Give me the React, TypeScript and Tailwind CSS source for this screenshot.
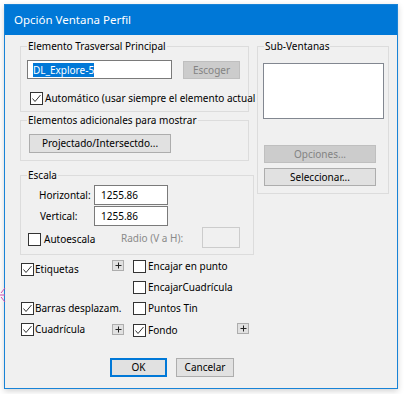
import React from "react";

function CheckBox({ checked }: { checked?: boolean }) {
  return (
    <div className="flex h-[13px] w-[13px] shrink-0 items-center justify-center border border-[#333333] bg-white">
      {checked && (
        <svg width="11" height="11" viewBox="0 0 11 11" fill="none">
          <path d="M1.5 5.5 L4 8.5 L9.5 2" stroke="#333333" strokeWidth="1" />
        </svg>
      )}
    </div>
  );
}

function PlusButton() {
  return (
    <div className="flex h-[11px] w-[12px] shrink-0 items-center justify-center border border-[#adadad] bg-[#e1e1e1]">
      <svg width="7" height="7" viewBox="0 0 7 7" fill="none">
        <path d="M3.5 0.5 V6.5 M0.5 3.5 H6.5" stroke="#222222" strokeWidth="1" />
      </svg>
    </div>
  );
}

function WinButton({
  label,
  disabled,
  isDefault,
  className,
}: {
  label: string;
  disabled?: boolean;
  isDefault?: boolean;
  className?: string;
}) {
  const look = disabled
    ? "border border-[#bfbfbf] bg-[#cccccc] text-[#838383]"
    : isDefault
      ? "border-2 border-[#0078d7] bg-[#e1e1e1] text-black"
      : "border border-[#adadad] bg-[#e1e1e1] text-black";
  return (
    <div
      className={`flex shrink-0 items-center justify-center text-[10px] leading-[13px] ${look} ${className ?? ""}`}
    >
      {label}
    </div>
  );
}

function CheckItem({
  label,
  checked,
  gap = "gap-[1px]",
  className,
}: {
  label: string;
  checked?: boolean;
  gap?: string;
  className?: string;
}) {
  return (
    <div className={`flex items-center whitespace-nowrap ${gap} ${className ?? ""}`}>
      <CheckBox checked={checked} />
      <span className="leading-[13px]">{label}</span>
    </div>
  );
}

export default function App() {
  return (
    <div className="relative min-h-screen bg-white font-['Noto_Sans',sans-serif] text-[10px] text-black">
      {/* stray pink mark at the left edge of the capture */}
      <svg
        className="absolute left-0 top-[287px]"
        width="6"
        height="16"
        viewBox="0 0 6 16"
        fill="none"
      >
        <path d="M5 1 L1 6 M0 8 H5 M1 10 L5 15" stroke="#d04bb0" strokeWidth="1" />
      </svg>

      <div className="ml-[4px] pt-[4px]">
        <div className="flex h-[385px] w-[394px] flex-col border border-[#1883d7] bg-[#f0f0f0] shadow-[0_2px_6px_rgba(0,0,0,0.18)]">
          {/* title bar */}
          <div className="flex h-[30px] shrink-0 items-center bg-[#0078d7] pl-[9px] text-[11.5px] text-white">
            Opción Ventana Perfil
          </div>

          <div className="flex flex-1 flex-col">
            <div className="flex items-start">
              {/* left column */}
              <div className="ml-[15px] mt-[4px] flex w-[234px] flex-col">
                <fieldset className="w-[229px] min-w-0 border border-[#dcdcdc] pb-[6px] pl-[6px]">
                  <legend className="px-[1px] leading-[15px]">Elemento Trasversal Principal</legend>
                  <div className="mt-[6px] flex items-start">
                    <div className="flex h-[19px] w-[145px] items-center border border-[#7a7a7a] bg-white pl-[5px]">
                      <span className="bg-[#0078d7] leading-[14px] text-white">DL_Explore-5</span>
                    </div>
                    <WinButton label="Escoger" disabled className="ml-[11px] mt-[1px] h-[18px] w-[57px]" />
                  </div>
                  <CheckItem
                    label="Automático (usar siempre el elemento actual"
                    checked
                    gap="gap-[2px]"
                    className="ml-[3px] mt-[13px] h-[13px]"
                  />
                </fieldset>

                <fieldset className="mt-[1px] w-[229px] min-w-0 border border-[#dcdcdc] pb-[7px] pl-[6px]">
                  <legend className="px-[1px] leading-[15px]">Elementos adicionales para mostrar</legend>
                  <WinButton label="Projectado/Intersectdo..." className="ml-[2px] mt-[6px] h-[19px] w-[142px]" />
                </fieldset>

                <fieldset className="mt-[7px] w-[234px] min-w-0 border border-[#dcdcdc] pb-[6px] pl-[6px]">
                  <legend className="px-[1px] leading-[15px]">Escala</legend>
                  <div className="mt-[2px] flex h-[20px] items-center">
                    <span className="w-[67px] pl-[12px]">Horizontal:</span>
                    <div className="flex h-[20px] w-[74px] items-center border border-[#7a7a7a] bg-white pl-[6px]">
                      1255.86
                    </div>
                  </div>
                  <div className="mt-[1px] flex h-[20px] items-center">
                    <span className="w-[67px] pl-[13px]">Vertical:</span>
                    <div className="flex h-[20px] w-[74px] items-center border border-[#7a7a7a] bg-white pl-[6px]">
                      1255.86
                    </div>
                  </div>
                  <div className="mt-[1px] flex h-[21px] items-start">
                    <div className="w-[94px] pl-[1px] pt-[6px]">
                      <CheckItem label="Autoescala" gap="gap-[3px]" />
                    </div>
                    <span className="mt-[5px] w-[81px] leading-[13px] text-[#8a8a8a]">Radio (V a H):</span>
                    <div className="h-[21px] w-[38px] border border-[#cccccc] bg-[#f0f0f0]" />
                  </div>
                </fieldset>
              </div>

              {/* right column */}
              <fieldset className="ml-[3px] mt-[4px] w-[132px] min-w-0 border border-[#dcdcdc] pb-[7px] pl-[5px]">
                <legend className="ml-[1px] px-[1px] leading-[15px]">Sub-Ventanas</legend>
                <div className="mt-[9px] h-[56px] w-[121px] border border-[#828790] bg-white" />
                <WinButton label="Opciones..." disabled className="ml-[1px] mt-[26px] h-[18px] w-[112px]" />
                <WinButton label="Seleccionar..." className="ml-[1px] mt-[5px] h-[18px] w-[112px]" />
              </fieldset>
            </div>

            {/* option checkboxes */}
            <div className="ml-[16px] mt-[5px] flex flex-col">
              <div className="flex h-[21px] items-start">
                <div className="flex w-[112px] items-start">
                  <CheckItem label="Etiquetas" checked className="mt-[3px] w-[91px]" />
                  <PlusButton />
                </div>
                <CheckItem label="Encajar en punto" gap="gap-[2px]" />
              </div>
              <div className="flex h-[21px] items-start">
                <div className="w-[112px]" />
                <CheckItem label="EncajarCuadrícula" gap="gap-[2px]" />
              </div>
              <div className="flex h-[21px] items-start">
                <div className="flex w-[112px] items-start">
                  <CheckItem label="Barras desplazam." checked className="w-[91px]" />
                </div>
                <CheckItem label="Puntos Tin" gap="gap-[2px]" />
              </div>
              <div className="flex h-[21px] items-start">
                <div className="flex w-[112px] items-start">
                  <CheckItem label="Cuadrícula" checked className="w-[91px]" />
                  <div className="mt-[1px]">
                    <PlusButton />
                  </div>
                </div>
                <div className="flex items-start">
                  <CheckItem label="Fondo" checked gap="gap-[2px]" className="mt-[1px] w-[104px]" />
                  <PlusButton />
                </div>
              </div>
            </div>

            {/* dialog buttons */}
            <div className="ml-[105px] mt-[14px] flex">
              <WinButton label="OK" isDefault className="h-[19px] w-[57px]" />
              <WinButton label="Cancelar" className="ml-[9px] h-[19px] w-[58px]" />
            </div>
          </div>
        </div>
      </div>
    </div>
  );
}
